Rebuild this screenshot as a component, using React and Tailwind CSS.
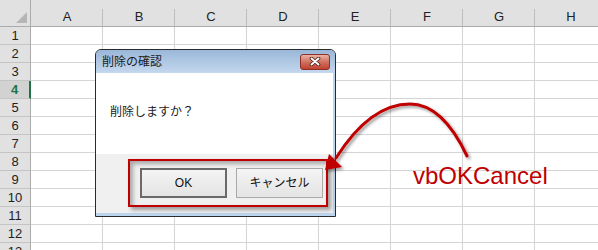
import { Fragment } from 'react';

const COLS = ['A', 'B', 'C', 'D', 'E', 'F', 'G', 'H'];
const ROWS = [1, 2, 3, 4, 5, 6, 7, 8, 9, 10, 11, 12, 13];

const Sheet = () => (
    <div className="grid grid-cols-[31px_repeat(8,72px)] grid-rows-[27px_repeat(13,18px)] w-[607px]">
        {/* top-left corner */}
        <div className="relative bg-[#e1e1e1] border-r border-b border-[#ababab]">
            <div className="absolute right-[3px] bottom-[3px] w-0 h-0 border-l-[11px] border-l-transparent border-b-[11px] border-b-[#b5b5b5]" />
        </div>
        {COLS.map((c) => (
            <div
                key={c}
                className="relative bg-[#e1e1e1] border-b border-[#ababab] flex justify-center pt-[9px] text-[13px] leading-[16px] text-[#222]"
            >
                {c}
                <div className="absolute right-0 top-[9px] bottom-0 w-px bg-[#bdbdbd]" />
            </div>
        ))}
        {ROWS.map((r) => (
            <Fragment key={r}>
                {r === 4 ? (
                    <div className="bg-[#d2d2d2] border-b border-[#c4c4c4] border-r-2 border-r-[#217346] flex items-center justify-center text-[13px] font-bold text-[#217346]">
                        {r}
                    </div>
                ) : (
                    <div className="bg-[#e1e1e1] border-b border-[#c4c4c4] border-r border-r-[#ababab] flex items-center justify-center text-[13px] text-[#222]">
                        {r}
                    </div>
                )}
                {COLS.map((c) => (
                    <div key={c} className="border-r border-b border-[#d4d4d4]" />
                ))}
            </Fragment>
        ))}
    </div>
);

const CloseButton = () => (
    <div className="w-[30px] h-[16px] rounded-[3px] border border-[#8b3127] bg-gradient-to-b from-[#e8b2a6] via-[#d0705f] to-[#c2402f] flex items-center justify-center">
        <svg width="12" height="9" viewBox="0 0 12 9">
            <path d="M2.5 1.5 L9.5 7.5 M9.5 1.5 L2.5 7.5" stroke="#4a1c15" strokeWidth="3.6" strokeLinecap="round" />
            <path d="M2.5 1.5 L9.5 7.5 M9.5 1.5 L2.5 7.5" stroke="#ffffff" strokeWidth="2" strokeLinecap="round" />
        </svg>
    </div>
);

const Dialog = () => (
    <div className="absolute left-[95px] top-[49px] w-[241px] h-[168px] border border-[#2b2b2b] rounded-t-[6px] overflow-hidden bg-[#bcd4ee] flex flex-col">
        <div className="h-[23px] shrink-0 bg-gradient-to-b from-[#9ab7d9] to-[#c4d8ee] flex items-center justify-between pl-[6px] pr-[5px]">
            <span className="text-[12px] leading-[16px] text-[#1b1b1b]">削除の確認</span>
            <CloseButton />
        </div>
        <div className="mr-[2px] flex flex-col">
            <div className="h-[81px] bg-white pl-[14px] pt-[31px] text-[12px] leading-[16px] text-[#1b1b1b]">
                削除しますか？
            </div>
            <div className="h-[59px] bg-[#f0f0f0] flex justify-end gap-[9px] pr-[10px] pt-[14px]">
                <button className="w-[87px] h-[30px] border-2 border-[#6a6a6a] bg-gradient-to-b from-[#f4f4f4] to-[#e4e4e4] text-[12px] text-[#111]">
                    OK
                </button>
                <button className="w-[87px] h-[30px] border border-[#a9a9a9] bg-gradient-to-b from-[#f4f4f4] to-[#e4e4e4] text-[12px] text-[#111]">
                    キャンセル
                </button>
            </div>
        </div>
    </div>
);

const Arrow = () => (
    <svg className="absolute left-0 top-0 pointer-events-none" width="598" height="250" viewBox="0 0 598 250">
        <defs>
            <filter id="sh" x="-20%" y="-20%" width="140%" height="140%">
                <feDropShadow dx="2" dy="2" stdDeviation="1.6" floodColor="#000" floodOpacity="0.4" />
            </filter>
        </defs>
        <g filter="url(#sh)">
            <path d="M467 156 C450 120 430 104 410 104 C385 104 360 120 336 158" fill="none" stroke="#c00000" strokeWidth="3" strokeLinecap="round" />
            <polygon points="325,170 329,154 342,167" fill="#c00000" />
        </g>
    </svg>
);

export default function App() {
    return (
        <div className="relative w-[598px] h-[250px] overflow-hidden bg-white font-['Liberation_Sans','Noto_Sans_CJK_JP',sans-serif]">
            <Sheet />
            <Dialog />
            {/* annotation box around the buttons */}
            <div className="absolute left-[128px] top-[159px] w-[200px] h-[48px] border-2 border-[#c00000] shadow-[3px_3px_4px_rgba(0,0,0,0.35),inset_3px_3px_4px_rgba(0,0,0,0.3)]" />
            <Arrow />
            <div className="absolute left-[413px] top-[164px] text-[24px] leading-none text-[#c00000]">vbOKCancel</div>
        </div>
    );
}
